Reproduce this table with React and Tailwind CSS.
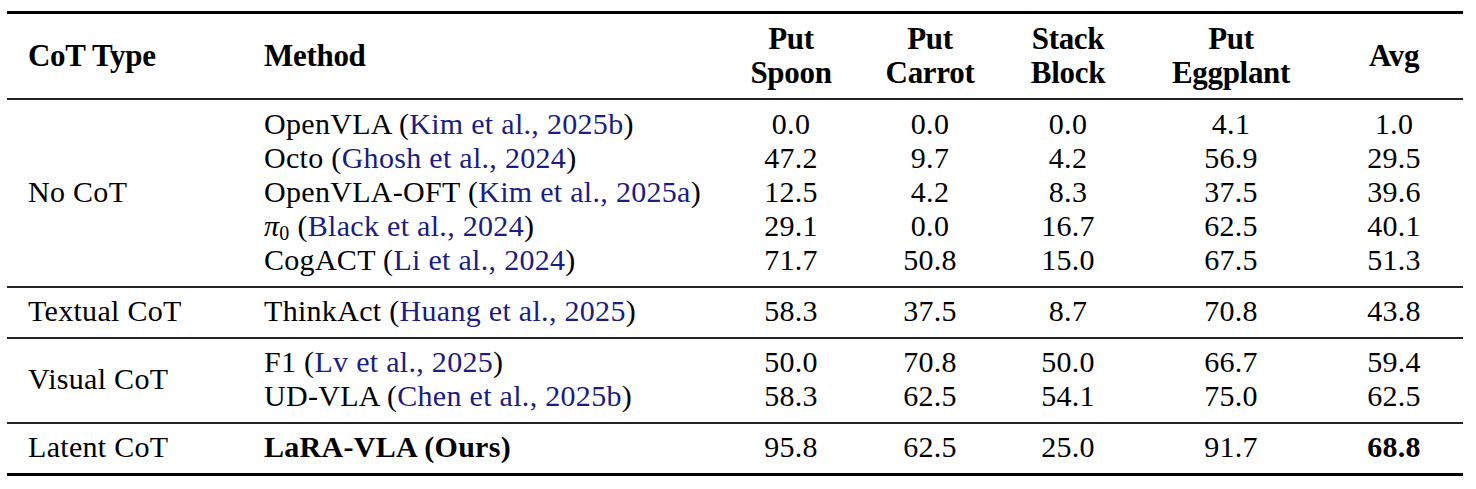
import React from 'react';

const cite = 'text-[#1c1c82]';

const groups = [
  {
    type: 'No CoT',
    rows: [
      { name: 'OpenVLA', ref: 'Kim et al., 2025b', vals: ['0.0', '0.0', '0.0', '4.1', '1.0'] },
      { name: 'Octo', ref: 'Ghosh et al., 2024', vals: ['47.2', '9.7', '4.2', '56.9', '29.5'] },
      { name: 'OpenVLA-OFT', ref: 'Kim et al., 2025a', vals: ['12.5', '4.2', '8.3', '37.5', '39.6'] },
      { name: 'pi', ref: 'Black et al., 2024', vals: ['29.1', '0.0', '16.7', '62.5', '40.1'] },
      { name: 'CogACT', ref: 'Li et al., 2024', vals: ['71.7', '50.8', '15.0', '67.5', '51.3'] },
    ],
  },
  {
    type: 'Textual CoT',
    rows: [{ name: 'ThinkAct', ref: 'Huang et al., 2025', vals: ['58.3', '37.5', '8.7', '70.8', '43.8'] }],
  },
  {
    type: 'Visual CoT',
    rows: [
      { name: 'F1', ref: 'Lv et al., 2025', vals: ['50.0', '70.8', '50.0', '66.7', '59.4'] },
      { name: 'UD-VLA', ref: 'Chen et al., 2025b', vals: ['58.3', '62.5', '54.1', '75.0', '62.5'] },
    ],
  },
  {
    type: 'Latent CoT',
    ours: true,
    rows: [{ name: 'LaRA-VLA (Ours)', vals: ['95.8', '62.5', '25.0', '91.7', '68.8'] }],
  },
];

const cols = 'grid grid-cols-[236px_478px_140px_138px_138px_188px_138px]';

function MethodName({ row, ours }) {
  if (ours) return <span className="font-bold">{row.name}</span>;
  return (
    <span>
      {row.name === 'pi' ? (
        <>
          <span className="italic">π</span>
          <span className="text-[20px] leading-[0] relative top-[4px]">0</span>
        </>
      ) : (
        row.name
      )}{' '}
      (<span className={cite}>{row.ref}</span>)
    </span>
  );
}

export default function App() {
  return (
    <div className="bg-white w-[1476px] h-[489px] pt-[11px] pl-[7px] font-[family-name:Liberation_Serif,serif] text-black text-[30px] leading-[34px]">
      <div className="w-[1456px] border-t-[3px] border-b-[3px] border-black">
        <div className={`${cols} py-[8px] border-b-2 border-[#222] font-bold text-[31px] tracking-[-0.3px]`}>
          <div className="pl-[21px] self-center">CoT Type</div>
          <div className="pl-[21px] self-center">Method</div>
          <div className="text-center">Put<br />Spoon</div>
          <div className="text-center">Put<br />Carrot</div>
          <div className="text-center">Stack<br />Block</div>
          <div className="text-center">Put<br />Eggplant</div>
          <div className="text-center self-center">Avg</div>
        </div>
        {groups.map((g, gi) => (
          <div
            key={g.type}
            className={`${cols} tracking-[0.3px] ${gi === 0 ? 'pt-[7px] pb-[9px]' : 'pt-[6px] pb-[9px]'} ${gi < groups.length - 1 ? 'border-b-2 border-[#222]' : ''}`}
          >
            <div className="pl-[21px] self-center" style={{ gridRow: `1 / span ${g.rows.length}` }}>
              {g.type}
            </div>
            {g.rows.map((r, ri) => (
              <React.Fragment key={ri}>
                <div className="pl-[21px] col-start-2 whitespace-nowrap">
                  <MethodName row={r} ours={g.ours} />
                </div>
                {r.vals.map((v, vi) => (
                  <div
                    key={vi}
                    className={`text-center ${g.ours && vi === 4 ? 'font-bold' : ''}`}
                  >
                    {v}
                  </div>
                ))}
              </React.Fragment>
            ))}
          </div>
        ))}
      </div>
    </div>
  );
}
